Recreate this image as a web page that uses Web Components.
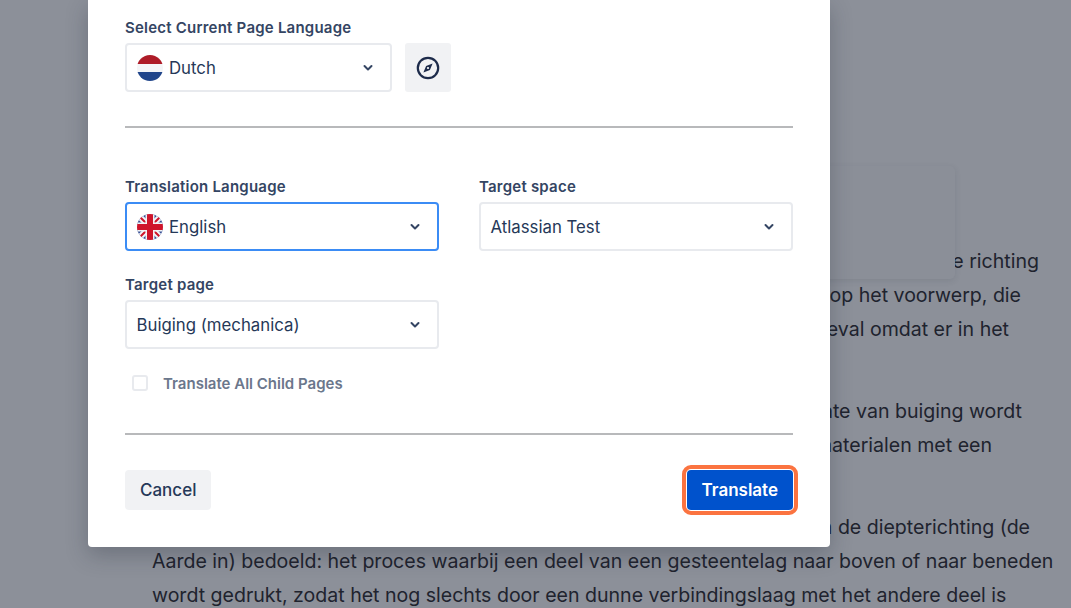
<!DOCTYPE html>
<html>
<head>
<meta charset="utf-8">
<style>
	html, body { margin: 0; height: 100%; overflow: hidden; }
	body { background: #8c9099; font-family: Inter, "Liberation Sans", sans-serif; }
</style>
</head>
<body>
<article-bg>
	<bg-line end="1039">In de mechanica is buiging het vervormen van een voorwerp in de richting</bg-line>
	<bg-line end="1021">dwars op de lengte ervan door een kracht op het voorwerp, die</bg-line>
	<bg-line end="1009" gap="1">niet langs de as werkt. Dit is het geval omdat er in het</bg-line>
	<bg-line end="1022">materiaal spanning optreedt. De mate van buiging wordt</bg-line>
	<bg-line end="992" gap="1">vooral beschreven voor materialen met een</bg-line>
	<bg-line end="1030">In de geologie wordt met buiging een beweging in de diepterichting (de</bg-line>
	<bg-line>Aarde in) bedoeld: het proces waarbij een deel van een gesteentelag naar boven of naar beneden</bg-line>
	<bg-line>wordt gedrukt, zodat het nog slechts door een dunne verbindingslaag met het andere deel is</bg-line>
</article-bg>
<float-card></float-card>
<translate-modal>
	<field-label>Select Current Page Language</field-label>
	<div slot="source">
		<ui-select flag="nl" style="width:267px">Dutch</ui-select>
		<icon-button></icon-button>
	</div>
	<ui-select slot="lang" label="Translation Language" flag="gb" focused>English</ui-select>
	<ui-select slot="space" label="Target space">Atlassian Test</ui-select>
	<ui-select slot="page" label="Target page">Buiging (mechanica)</ui-select>
	<ui-check slot="check">Translate All Child Pages</ui-check>
	<ui-button slot="cancel">Cancel</ui-button>
	<ui-button slot="submit" primary>Translate</ui-button>
</translate-modal>

<script>
class ArticleBg extends HTMLElement {
	connectedCallback(){
		this.attachShadow({ mode: 'open' }).innerHTML = `
		<style>
			:host {
				display: block;
				padding: 244px 0 0 152px;
				height: 364px;
				overflow: hidden;
				color: #20232e;
				font-size: 19.56px;
				line-height: 34px;
			}
		</style>
		<slot></slot>`
	}
}

class BgLine extends HTMLElement {
	connectedCallback(){
		const end = this.getAttribute('end')
		// lines run on behind the modal, only the right end shows
		const width = end ? (end - 152) + 'px' : '100%'
		const gap = this.hasAttribute('gap') ? '48px' : '0'
		this.attachShadow({ mode: 'open' }).innerHTML = `
		<style>
			:host {
				display: flex;
				justify-content: ${end ? 'flex-end' : 'flex-start'};
				width: ${width};
				height: 34px;
				margin-bottom: ${gap};
				white-space: nowrap;
			}
		</style>
		<slot></slot>`
	}
}

class FloatCard extends HTMLElement {
	connectedCallback(){
		this.attachShadow({ mode: 'open' }).innerHTML = `
		<style>
			:host {
				position: absolute;
				left: 700px;
				top: 166px;
				width: 255px;
				height: 113px;
				background: #8b8f98;
				border-radius: 5px;
				box-shadow: 0 2px 6px rgba(30, 35, 50, .1);
			}
		</style>`
	}
}

class TranslateModal extends HTMLElement {
	connectedCallback(){
		this.attachShadow({ mode: 'open' }).innerHTML = `
		<style>
			* { box-sizing: border-box; }
			:host {
				position: absolute;
				left: 88px;
				top: 0;
				width: 742px;
				height: 547px;
				box-sizing: border-box;
				padding: 19px 37px 0;
				background: #fff;
				border-radius: 0 0 4px 4px;
				box-shadow: 0 8px 22px rgba(30, 35, 50, .28);
				color: #253858;
			}
			::slotted([slot="source"]) {
				display: flex;
				gap: 13px;
				margin-top: 6px;
			}
			hr {
				height: 2px;
				margin: 0;
				border: 0;
				background: #b8b9bb;
			}
			.top-rule { margin-top: 34px; }
			.grid {
				display: grid;
				grid-template-columns: 314px 314px;
				column-gap: 40px;
				row-gap: 25px;
				margin-top: 50px;
			}
			.check { margin-top: 26px; padding-left: 7px; }
			.bottom-rule { margin-top: 42px; }
			.actions {
				display: flex;
				justify-content: space-between;
				margin-top: 35px;
			}
		</style>
		<slot></slot>
		<slot name="source"></slot>
		<hr class="top-rule">
		<div class="grid">
			<slot name="lang"></slot>
			<slot name="space"></slot>
			<slot name="page"></slot>
		</div>
		<div class="check"><slot name="check"></slot></div>
		<hr class="bottom-rule">
		<div class="actions">
			<slot name="cancel"></slot>
			<slot name="submit"></slot>
		</div>`
	}
}

class FieldLabel extends HTMLElement {
	connectedCallback(){
		this.attachShadow({ mode: 'open' }).innerHTML = `
		<style>
			:host {
				display: block;
				height: 18px;
				font-size: 15px;
				letter-spacing: .22px;
				line-height: 18px;
				font-weight: 600;
				color: #344563;
			}
		</style>
		<slot></slot>`
	}
}

const FLAGS = {
	nl: `<rect width="26" height="9" fill="#ae1c28"/>
		<rect y="9" width="26" height="8" fill="#f4f5f7"/>
		<rect y="17" width="26" height="9" fill="#21468b"/>`,
	gb: `<rect width="26" height="26" fill="#3a5296"/>
		<path d="M0 0l26 26M26 0L0 26" stroke="#f2f3f6" stroke-width="6"/>
		<path d="M0 0l26 26M26 0L0 26" stroke="#cf142b" stroke-width="2"/>
		<rect x="8.5" width="9" height="26" fill="#f2f3f6"/>
		<rect y="8.5" width="26" height="9" fill="#f2f3f6"/>
		<rect x="10" width="6" height="26" fill="#cf142b"/>
		<rect y="10" width="26" height="6" fill="#cf142b"/>`
}

class UiSelect extends HTMLElement {
	connectedCallback(){
		const label = this.getAttribute('label')
		const flag = this.getAttribute('flag')
		this.attachShadow({ mode: 'open' }).innerHTML = `
		<style>
			* { box-sizing: border-box; }
			:host { display: block; }
			.label {
				height: 18px;
				margin-bottom: 6px;
				font-size: 15px;
				letter-spacing: .22px;
				line-height: 18px;
				font-weight: 600;
				color: #344563;
			}
			.box {
				display: flex;
				align-items: center;
				height: 49px;
				padding: 0 16px 0 ${flag ? 10 : 9.5}px;
				border: 2px solid #e8eaee;
				border-radius: 4px;
				font-size: 16.8px;
				color: #253858;
			}
			:host([focused]) .box {
				border-color: #3b8cf5;
			}
			svg.flag {
				flex: none;
				width: 26px;
				height: 26px;
				margin-right: 6px;
				border-radius: 50%;
			}
			.text { flex: 1; }
			.chev { flex: none; width: 12px; height: 8px; }
		</style>
		${label ? `<div class="label">${label}</div>` : ''}
		<div class="box">
			${flag ? `<svg class="flag" viewBox="0 0 26 26">${FLAGS[flag]}</svg>` : ''}
			<span class="text"><slot></slot></span>
			<svg class="chev" viewBox="0 0 12 8"><path d="M2.5 2l3.5 3.5L9.5 2" fill="none" stroke="#344563" stroke-width="2" stroke-linecap="round" stroke-linejoin="round"/></svg>
		</div>`
	}
}

class IconButton extends HTMLElement {
	connectedCallback(){
		this.attachShadow({ mode: 'open' }).innerHTML = `
		<style>
			:host {
				display: flex;
				align-items: center;
				justify-content: center;
				width: 46px;
				height: 49px;
				background: #f1f2f4;
				border-radius: 3px;
			}
			svg { width: 24px; height: 24px; }
		</style>
		<svg viewBox="0 0 24 24">
			<circle cx="12" cy="12" r="10.2" fill="none" stroke="#1d2b4a" stroke-width="2.2"/>
			<path d="M16.6 7.4l-2.7 6.5-6.5 2.7 2.7-6.5z" fill="#1d2b4a"/>
			<circle cx="12" cy="12" r="1.1" fill="#fff"/>
		</svg>`
	}
}

class UiCheck extends HTMLElement {
	connectedCallback(){
		this.attachShadow({ mode: 'open' }).innerHTML = `
		<style>
			:host {
				display: flex;
				align-items: center;
				gap: 15px;
				height: 16px;
				font-size: 15px;
				font-weight: 600;
				color: #6b778c;
			}
			i {
				width: 16px;
				height: 16px;
				box-sizing: border-box;
				border: 2px solid #e8eaee;
				border-radius: 3px;
			}
		</style>
		<i></i><slot></slot>`
	}
}

class UiButton extends HTMLElement {
	connectedCallback(){
		const primary = this.hasAttribute('primary')
		this.attachShadow({ mode: 'open' }).innerHTML = `
		<style>
			:host {
				display: inline-flex;
				align-items: center;
				justify-content: center;
				height: 40px;
				padding: 0 15px;
				border-radius: 4px;
				font-size: 17px;
				font-weight: ${primary ? 600 : 500};
				color: ${primary ? '#fff' : '#253858'};
				background: ${primary ? '#0052cc' : '#f1f2f4'};
				${primary ? 'outline: 4px solid #fb7340; outline-offset: 1px;' : ''}
			}
		</style>
		<slot></slot>`
	}
}

customElements.define('article-bg', ArticleBg)
customElements.define('bg-line', BgLine)
customElements.define('float-card', FloatCard)
customElements.define('translate-modal', TranslateModal)
customElements.define('field-label', FieldLabel)
customElements.define('ui-select', UiSelect)
customElements.define('icon-button', IconButton)
customElements.define('ui-check', UiCheck)
customElements.define('ui-button', UiButton)
</script>
</body>
</html>
